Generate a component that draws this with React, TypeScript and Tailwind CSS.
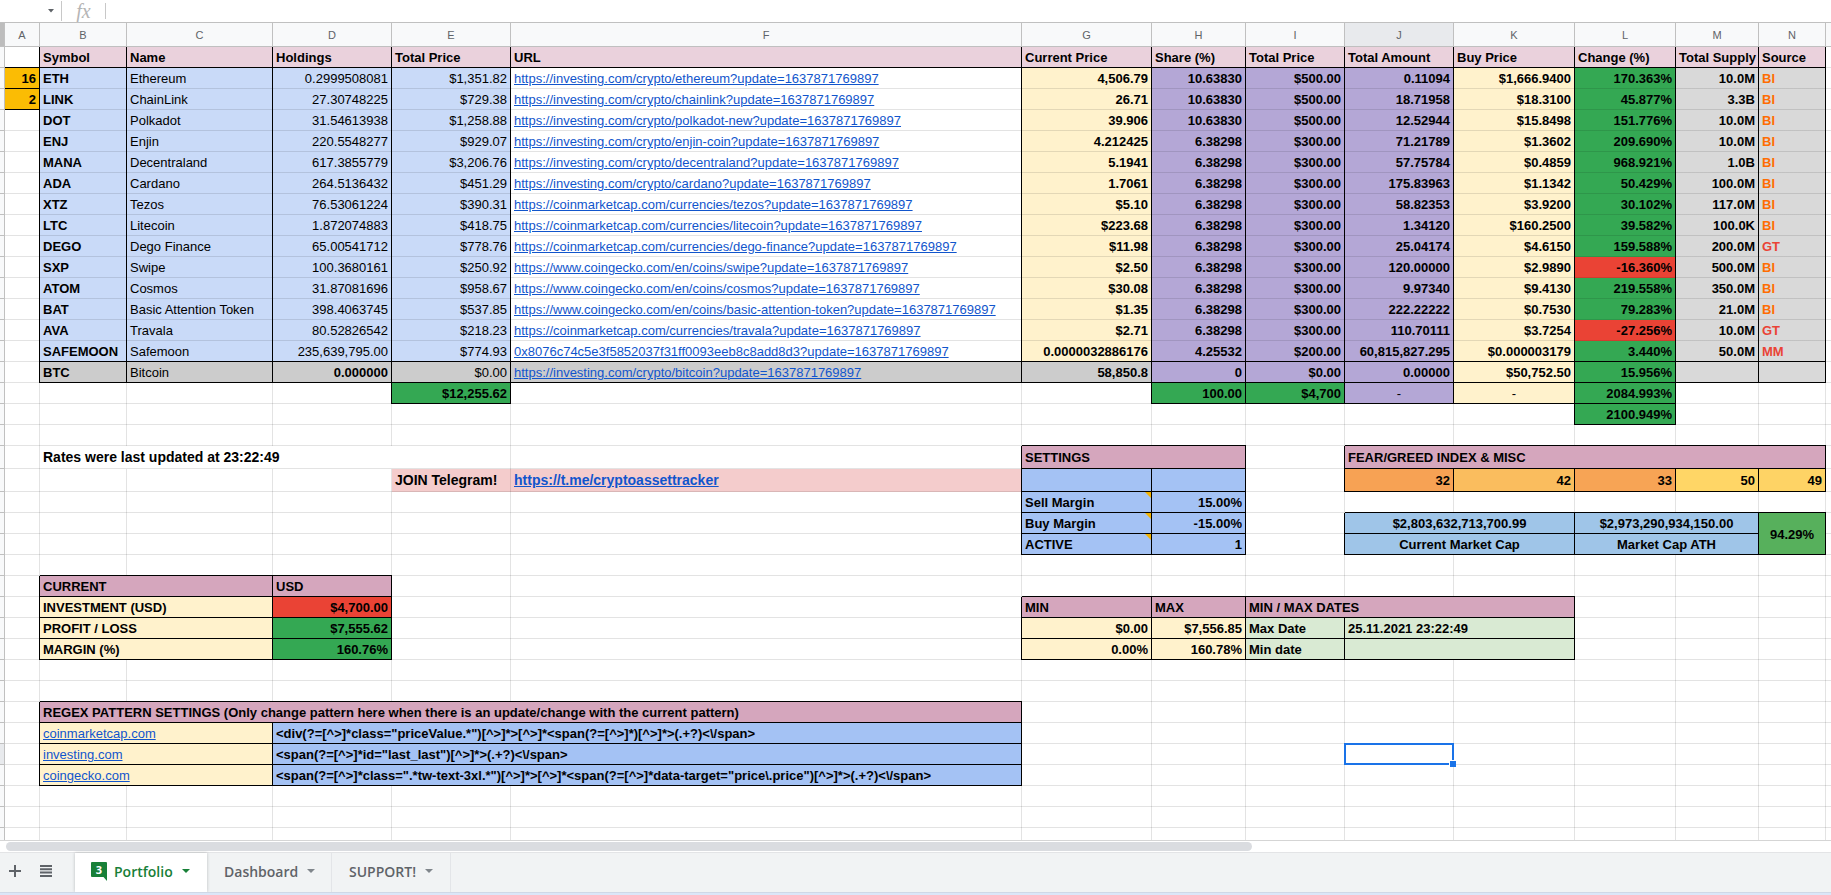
import React from 'react';

type Cell = {
  text: string;
  fill?: string;
  align?: string;
  cols?: number;
  rows?: number;
  regular?: boolean;
  large?: boolean;
  link?: boolean;
  note?: boolean;
  color?: string;
  selected?: boolean;
};

const LETTERS = ['A', 'B', 'C', 'D', 'E', 'F', 'G', 'H', 'I', 'J', 'K', 'L', 'M', 'N'];
const WIDTHS = [
  'w-[35px]', 'w-[87px]', 'w-[146px]', 'w-[119px]', 'w-[119px]', 'w-[511px]', 'w-[130px]',
  'w-[94px]', 'w-[99px]', 'w-[109px]', 'w-[121px]', 'w-[101px]', 'w-[83px]', 'w-[67px]',
];
const ROW_COUNT = 38;
const ACTIVE_ROW = 34;

const PINK = 'bg-[#ead1dc]';
const ROSE = 'bg-[#d5a6bd]';
const SKY = 'bg-[#c9daf8]';
const BLUE = 'bg-[#a4c2f4]';
const CREAM = 'bg-[#fff2cc]';
const VIOLET = 'bg-[#b4a7d6]';
const GREEN = 'bg-[#34a853]';
const RED = 'bg-[#ea4335]';
const SILVER = 'bg-[#d9d9d9]';
const GREY = 'bg-[#cccccc]';
const MINT = 'bg-[#d9ead3]';
const AZURE = 'bg-[#9fc5e8]';
const BLUSH = 'bg-[#f4cccc]';
const AMBER = 'bg-[#fbbc04]';

// Right and bottom grid lines of a cell; black lines join cleanly with the faint ones.
const LINES = {
  faint: 'bg-[image:linear-gradient(#0000001c,#0000001c),linear-gradient(#0000001c,#0000001c)]',
  right: 'bg-[image:linear-gradient(#000,#000),linear-gradient(#0000001c,#0000001c)]',
  bottom: 'bg-[image:linear-gradient(#0000001c,#0000001c),linear-gradient(#000,#000)]',
  both: 'bg-[image:linear-gradient(#000,#000),linear-gradient(#000,#000)]',
};

const STAMP = '?update=1637871769897';
const INV = 'https://investing.com/crypto/';
const CMC = 'https://coinmarketcap.com/currencies/';
const GECKO = 'https://www.coingecko.com/en/coins/';

const COINS: string[][] = [
  ['ETH', 'Ethereum', '0.2999508081', '$1,351.82', INV + 'ethereum', '4,506.79', '10.63830', '$500.00', '0.11094', '$1,666.9400', '170.363%', '10.0M', 'BI'],
  ['LINK', 'ChainLink', '27.30748225', '$729.38', INV + 'chainlink', '26.71', '10.63830', '$500.00', '18.71958', '$18.3100', '45.877%', '3.3B', 'BI'],
  ['DOT', 'Polkadot', '31.54613938', '$1,258.88', INV + 'polkadot-new', '39.906', '10.63830', '$500.00', '12.52944', '$15.8498', '151.776%', '10.0M', 'BI'],
  ['ENJ', 'Enjin', '220.5548277', '$929.07', INV + 'enjin-coin', '4.212425', '6.38298', '$300.00', '71.21789', '$1.3602', '209.690%', '10.0M', 'BI'],
  ['MANA', 'Decentraland', '617.3855779', '$3,206.76', INV + 'decentraland', '5.1941', '6.38298', '$300.00', '57.75784', '$0.4859', '968.921%', '1.0B', 'BI'],
  ['ADA', 'Cardano', '264.5136432', '$451.29', INV + 'cardano', '1.7061', '6.38298', '$300.00', '175.83963', '$1.1342', '50.429%', '100.0M', 'BI'],
  ['XTZ', 'Tezos', '76.53061224', '$390.31', CMC + 'tezos', '$5.10', '6.38298', '$300.00', '58.82353', '$3.9200', '30.102%', '117.0M', 'BI'],
  ['LTC', 'Litecoin', '1.872074883', '$418.75', CMC + 'litecoin', '$223.68', '6.38298', '$300.00', '1.34120', '$160.2500', '39.582%', '100.0K', 'BI'],
  ['DEGO', 'Dego Finance', '65.00541712', '$778.76', CMC + 'dego-finance', '$11.98', '6.38298', '$300.00', '25.04174', '$4.6150', '159.588%', '200.0M', 'GT'],
  ['SXP', 'Swipe', '100.3680161', '$250.92', GECKO + 'swipe', '$2.50', '6.38298', '$300.00', '120.00000', '$2.9890', '-16.360%', '500.0M', 'BI'],
  ['ATOM', 'Cosmos', '31.87081696', '$958.67', GECKO + 'cosmos', '$30.08', '6.38298', '$300.00', '9.97340', '$9.4130', '219.558%', '350.0M', 'BI'],
  ['BAT', 'Basic Attention Token', '398.4063745', '$537.85', GECKO + 'basic-attention-token', '$1.35', '6.38298', '$300.00', '222.22222', '$0.7530', '79.283%', '21.0M', 'BI'],
  ['AVA', 'Travala', '80.52826542', '$218.23', CMC + 'travala', '$2.71', '6.38298', '$300.00', '110.70111', '$3.7254', '-27.256%', '10.0M', 'GT'],
  ['SAFEMOON', 'Safemoon', '235,639,795.00', '$774.93', '0x8076c74c5e3f5852037f31ff0093eeb8c8add8d3', '0.0000032886176', '4.25532', '$200.00', '60,815,827.295', '$0.000003179', '3.440%', '50.0M', 'MM'],
  ['BTC', 'Bitcoin', '0.000000', '$0.00', INV + 'bitcoin', '58,850.8', '0', '$0.00', '0.00000', '$50,752.50', '15.956%', '', ''],
];

const COIN_FILLS = [SKY, SKY, SKY, SKY, 'bg-white', CREAM, VIOLET, VIOLET, VIOLET, CREAM, GREEN, SILVER, SILVER];

const cells: Record<string, Cell> = {};
const outlines: { top: number; left: number; bottom: number; right: number }[] = [];

function parse(ref: string) {
  return { col: LETTERS.indexOf(ref[0]), row: Number(ref.slice(1)) };
}

function outline(from: string, to: string = from) {
  const a = parse(from);
  const b = parse(to);
  outlines.push({ top: a.row, left: a.col, bottom: b.row, right: b.col });
}

function put(ref: string, cell: Cell) {
  cells[ref] = cell;
}

function boxed(ref: string, cell: Cell) {
  put(ref, cell);
  const { col, row } = parse(ref);
  outline(ref, LETTERS[col + (cell.cols ?? 1) - 1] + (row + (cell.rows ?? 1) - 1));
}

['Symbol', 'Name', 'Holdings', 'Total Price', 'URL', 'Current Price', 'Share (%)', 'Total Price', 'Total Amount', 'Buy Price', 'Change (%)', 'Total Supply', 'Source'].forEach(
  (text, i) => boxed(LETTERS[i + 1] + 1, { text, fill: PINK }),
);

COINS.forEach((coin, r) => {
  const btc = coin[0] === 'BTC';
  coin.forEach((text, i) => {
    let fill = COIN_FILLS[i];
    if (btc && i < 6) fill = GREY;
    if (i === 10 && text.startsWith('-')) fill = RED;
    const cell: Cell = {
      text: i === 4 ? text + STAMP : text,
      fill,
      align: [0, 1, 4, 12].includes(i) ? 'text-left' : 'text-right',
      regular: i > 0 && i < 5 && !(btc && i === 2),
      link: i === 4,
      color: i === 12 ? (text === 'BI' ? 'text-[#ff6d01]' : 'text-[#ea4335]') : undefined,
    };
    put(LETTERS[i + 1] + (r + 2), cell);
  });
});
LETTERS.slice(1).forEach((l) => {
  outline(l + 2, l + 15);
  outline(l + 16);
});

boxed('A2', { text: '16', fill: AMBER, align: 'text-right' });
boxed('A3', { text: '2', fill: AMBER, align: 'text-right' });
boxed('E17', { text: '$12,255.62', fill: GREEN, align: 'text-right' });
boxed('H17', { text: '100.00', fill: GREEN, align: 'text-right' });
boxed('I17', { text: '$4,700', fill: GREEN, align: 'text-right' });
boxed('J17', { text: '-', fill: VIOLET, align: 'text-center', regular: true });
boxed('K17', { text: '-', fill: CREAM, align: 'text-center', regular: true });
boxed('L17', { text: '2084.993%', fill: GREEN, align: 'text-right' });
boxed('L18', { text: '2100.949%', fill: GREEN, align: 'text-right' });

put('B20', { text: 'Rates were last updated at 23:22:49', cols: 4, large: true });
put('E21', { text: 'JOIN Telegram!', fill: BLUSH, large: true });
put('F21', { text: 'https://t.me/cryptoassettracker', fill: BLUSH, large: true, link: true });

boxed('G20', { text: 'SETTINGS', fill: ROSE, cols: 2 });
boxed('G21', { text: '', fill: BLUE });
boxed('H21', { text: '', fill: BLUE });
boxed('G22', { text: 'Sell Margin', fill: BLUE, note: true });
boxed('H22', { text: '15.00%', fill: BLUE, align: 'text-right' });
boxed('G23', { text: 'Buy Margin', fill: BLUE, note: true });
boxed('H23', { text: '-15.00%', fill: BLUE, align: 'text-right' });
boxed('G24', { text: 'ACTIVE', fill: BLUE, note: true });
boxed('H24', { text: '1', fill: BLUE, align: 'text-right' });

boxed('J20', { text: 'FEAR/GREED INDEX & MISC', fill: ROSE, cols: 5 });
boxed('J21', { text: '32', fill: 'bg-[#f7a254]', align: 'text-right' });
boxed('K21', { text: '42', fill: 'bg-[#fabd5e]', align: 'text-right' });
boxed('L21', { text: '33', fill: 'bg-[#f7a455]', align: 'text-right' });
boxed('M21', { text: '50', fill: 'bg-[#ffd666]', align: 'text-right' });
boxed('N21', { text: '49', fill: 'bg-[#fed365]', align: 'text-right' });
boxed('J23', { text: '$2,803,632,713,700.99', fill: AZURE, align: 'text-center', cols: 2 });
boxed('L23', { text: '$2,973,290,934,150.00', fill: AZURE, align: 'text-center', cols: 2 });
boxed('N23', { text: '94.29%', fill: 'bg-[#57b05c]', align: 'text-center', rows: 2 });
boxed('J24', { text: 'Current Market Cap', fill: AZURE, align: 'text-center', cols: 2 });
boxed('L24', { text: 'Market Cap ATH', fill: AZURE, align: 'text-center', cols: 2 });

boxed('B26', { text: 'CURRENT', fill: ROSE, cols: 2 });
boxed('D26', { text: 'USD', fill: ROSE });
boxed('B27', { text: 'INVESTMENT (USD)', fill: CREAM, cols: 2 });
boxed('D27', { text: '$4,700.00', fill: RED, align: 'text-right' });
boxed('B28', { text: 'PROFIT / LOSS', fill: CREAM, cols: 2 });
boxed('D28', { text: '$7,555.62', fill: GREEN, align: 'text-right' });
boxed('B29', { text: 'MARGIN (%)', fill: CREAM, cols: 2 });
boxed('D29', { text: '160.76%', fill: GREEN, align: 'text-right' });

boxed('G27', { text: 'MIN', fill: ROSE });
boxed('H27', { text: 'MAX', fill: ROSE });
boxed('I27', { text: 'MIN / MAX DATES', fill: ROSE, cols: 3 });
boxed('G28', { text: '$0.00', fill: CREAM, align: 'text-right' });
boxed('H28', { text: '$7,556.85', fill: CREAM, align: 'text-right' });
boxed('I28', { text: 'Max Date', fill: MINT });
boxed('J28', { text: '25.11.2021 23:22:49', fill: MINT, cols: 2 });
boxed('G29', { text: '0.00%', fill: CREAM, align: 'text-right' });
boxed('H29', { text: '160.78%', fill: CREAM, align: 'text-right' });
boxed('I29', { text: 'Min date', fill: MINT });
boxed('J29', { text: '', fill: MINT, cols: 2 });

boxed('B32', { text: 'REGEX PATTERN SETTINGS (Only change pattern here when there is an update/change with the current pattern)', fill: ROSE, cols: 5 });
boxed('B33', { text: 'coinmarketcap.com', fill: CREAM, cols: 2, link: true, regular: true });
boxed('D33', { text: '<div(?=[^>]*class="priceValue.*")[^>]*>[^>]*<span(?=[^>]*)[^>]*>(.+?)<\\/span>', fill: BLUE, cols: 3 });
boxed('B34', { text: 'investing.com', fill: CREAM, cols: 2, link: true, regular: true });
boxed('D34', { text: '<span(?=[^>]*id="last_last")[^>]*>(.+?)<\\/span>', fill: BLUE, cols: 3 });
boxed('B35', { text: 'coingecko.com', fill: CREAM, cols: 2, link: true, regular: true });
boxed('D35', { text: '<span(?=[^>]*class=".*tw-text-3xl.*")[^>]*>[^>]*<span(?=[^>]*data-target="price\\.price")[^>]*>(.+?)<\\/span>', fill: BLUE, cols: 3 });
put('J34', { text: '', selected: true });

function darkRight(row: number, col: number) {
  return outlines.some((o) => row >= o.top && row <= o.bottom && (o.right === col || o.left === col + 1));
}

function darkBottom(row: number, col: number) {
  return outlines.some((o) => col >= o.left && col <= o.right && (o.bottom === row || o.top === row + 1));
}

function SheetCell({ row, col, cell }: { row: number; col: number; cell?: Cell }) {
  const cols = cell?.cols ?? 1;
  const rows = cell?.rows ?? 1;
  const right = darkRight(row, col + cols - 1);
  const bottom = darkBottom(row + rows - 1, col);
  const lines = right ? (bottom ? LINES.both : LINES.right) : bottom ? LINES.bottom : LINES.faint;
  const size = cell?.large ? 'pb-px text-[14px] leading-5' : 'pt-0.5 pb-px text-[13px] leading-[18px]';
  const weight = cell?.regular ? 'font-normal' : 'font-bold';
  return (
    <td
      colSpan={cols}
      rowSpan={rows}
      className={`bg-[length:1px_100%,100%_1px] bg-[position:right,bottom] bg-no-repeat ${lines} ${cell?.fill ?? ''} ${cell?.align ?? 'text-left'} ${size} ${weight} ${cell?.color ?? 'text-black'} ${cell?.note || cell?.selected ? 'relative' : ''} pr-1 pl-[3px] whitespace-nowrap`}
    >
      {cell?.link ? (
        <a href="#" className="text-[#1155cc] underline">{cell.text}</a>
      ) : (
        cell?.text
      )}
      {cell?.note && (
        <svg className="absolute top-0 right-px" width="6" height="6" viewBox="0 0 6 6" aria-hidden="true">
          <path d="M0 0H6V6Z" fill="#f4b400" />
        </svg>
      )}
      {cell?.selected && (
        <span className="absolute -top-px right-0 bottom-0 -left-px border-2 border-[#1a73e8]">
          <span className="absolute -right-1 -bottom-1 size-[7px] border-t border-l border-white bg-[#1a73e8]" />
        </span>
      )}
    </td>
  );
}

function SheetRow({ row }: { row: number }) {
  const tds: React.ReactNode[] = [];
  let col = 0;
  while (col < LETTERS.length) {
    if (row === 24 && col === 13) break;
    const cell = cells[LETTERS[col] + row];
    tds.push(<SheetCell key={col} row={row} col={col} cell={cell} />);
    col += cell?.cols ?? 1;
  }
  return (
    <tr className={row === 20 || row === 21 ? 'h-[23px]' : 'h-[21px]'}>
      <th className={`border-r border-b border-[#c0c0c0] p-0 ${row === ACTIVE_ROW ? 'bg-[#e8eaed]' : 'bg-[#f8f9fa]'}`} />
      {tds}
      <td className="border-b border-b-black/11 p-0" />
    </tr>
  );
}

function Caret({ className }: { className: string }) {
  return (
    <svg className={className} width="8" height="4" viewBox="0 0 8 4" aria-hidden="true">
      <path d="M0 0H8L4 4Z" fill="currentColor" />
    </svg>
  );
}

function FormulaBar() {
  return (
    <div className="flex h-[22px] shrink-0 items-center">
      <button aria-label="Name box" className="flex h-full w-[61px] items-center justify-end pr-[7px]">
        <svg width="6" height="4" viewBox="0 0 6 4" aria-hidden="true">
          <path d="M0 0H6L3 3.5Z" fill="#5f6368" />
        </svg>
      </button>
      <span className="h-5 w-px bg-[#c8c8c8]" />
      <span className="w-[43px] text-center font-['Liberation_Serif',serif] text-[20px] leading-[22px] text-[#b5b5b5] italic">
        fx
      </span>
      <span className="h-4 w-px bg-[#c8c8c8]" />
      <input aria-label="Formula" className="h-full min-w-0 flex-1 px-2 text-[13px] outline-none" />
    </div>
  );
}

function TabBar() {
  return (
    <div className="flex h-10 shrink-0 items-stretch border-t border-[#e3e4e6] bg-[#f1f3f4] font-['Open_Sans',sans-serif] text-[14px] font-semibold text-[#5f6368]">
      <div className="flex w-[75px] items-center pb-[3px]">
        <button aria-label="Add sheet" className="flex w-[30px] justify-center">
          <svg width="12" height="12" viewBox="0 0 12 12" aria-hidden="true">
            <path d="M5 0H7V5H12V7H7V12H5V7H0V5H5Z" fill="#5f6368" />
          </svg>
        </button>
        <button aria-label="All sheets" className="flex w-8 justify-center">
          <svg width="12" height="12" viewBox="0 0 12 12" aria-hidden="true">
            <path d="M0 0H12V2H0ZM0 3.3H12V5.3H0ZM0 6.600H12V8.600H0ZM0 10H12V12H0Z" fill="#5f6368" />
          </svg>
        </button>
      </div>
      <button className="flex w-[132px] items-center bg-white pb-[3px] pl-4 text-[#188038] shadow-[0_0_3px_rgba(60,64,67,0.3)]">
        <span className="relative mr-[7px] flex h-[18px] w-4 items-start justify-center">
          <svg className="absolute top-0 left-0" width="16" height="19" viewBox="0 0 16 19" aria-hidden="true">
            <path d="M1 0H15Q16 0 16 1V19L12.500 15H1Q0 15 0 14V1Q0 0 1 0Z" fill="#188038" />
          </svg>
          <span className="relative text-[11px] leading-[15px] font-bold text-white">3</span>
        </span>
        Portfolio
        <Caret className="ml-[9px]" />
      </button>
      <button className="flex w-[125px] items-center border-r border-[#e3e5e8] pb-[3px] pl-[17px]">
        Dashboard
        <Caret className="ml-[9px] text-[#80868b]" />
      </button>
      <button className="flex w-[119px] items-center border-r border-[#e3e5e8] pb-[3px] pl-[17px]">
        SUPPORT!
        <Caret className="ml-[9px] text-[#80868b]" />
      </button>
    </div>
  );
}

export default function App() {
  return (
    <div className="flex h-screen flex-col overflow-hidden bg-white font-['Liberation_Sans',Arial,sans-serif]">
      <FormulaBar />
      <main className="min-h-0 flex-1 overflow-hidden border-y border-t-[#c0c0c0] border-b-[#d5d5d5]">
        <table className="w-full table-fixed border-separate border-spacing-0">
          <colgroup>
            <col className="w-[5px]" />
            {WIDTHS.map((w, i) => (
              <col key={i} className={w} />
            ))}
            <col />
          </colgroup>
          <thead>
            <tr className="h-6">
              <th className="border-r border-b border-[#c0c0c0] bg-[#bdbdbd] p-0" />
              {LETTERS.map((l) => (
                <th
                  key={l}
                  className={`border-r border-b border-[#c0c0c0] p-0 text-[11px] leading-4 font-normal text-[#5f6368] ${l === 'J' ? 'bg-[#e8eaed]' : 'bg-[#f8f9fa]'}`}
                >
                  {l}
                </th>
              ))}
              <th className="border-b border-[#c0c0c0] bg-[#f8f9fa] p-0" />
            </tr>
          </thead>
          <tbody>
            {Array.from({ length: ROW_COUNT }, (_, i) => (
              <SheetRow key={i} row={i + 1} />
            ))}
          </tbody>
        </table>
      </main>
      <div className="flex h-[11px] shrink-0 items-center pl-1.5">
        <div className="h-[9px] w-[1246px] rounded-full bg-[#dadce0]" />
      </div>
      <TabBar />
      <div className="h-[3px] shrink-0 border-t border-[#cfd8e6] bg-[#dbe6f8]" />
    </div>
  );
}
